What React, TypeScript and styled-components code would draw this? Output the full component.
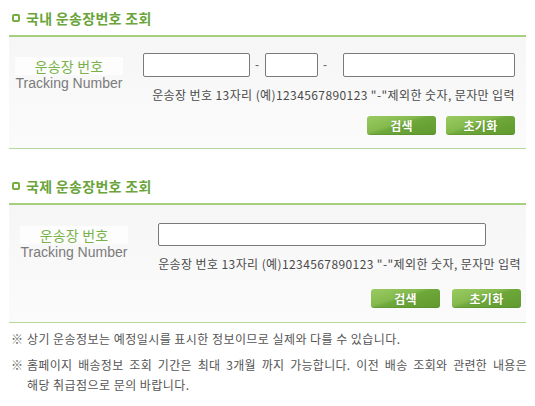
import React from 'react';
import styled, { createGlobalStyle } from 'styled-components';

const Global = createGlobalStyle`
  html, body { margin: 0; padding: 0; background: #fff; }
  body { font-family: "Noto Sans CJK KR", "Noto Sans", sans-serif; }
`;

const Page = styled.div`
  width: 517px;
  margin-left: 9px;
`;

const Section = styled.section<{ $top: number }>`
  margin-top: ${(p) => p.$top}px;
`;

const TitleBar = styled.h2`
  margin: 0;
  height: 35px;
  display: flex;
  align-items: center;
  gap: 6px;
  padding-left: 3px;
  font-size: 14px;
  font-weight: 700;
  color: #6aa43a;
  letter-spacing: 0.3px;
  border-bottom: 2px solid #a7cf80;
`;

const TitleIcon = styled.span`
  width: 8px;
  height: 8px;
  box-sizing: border-box;
  border: 2px solid #76ae43;
  border-radius: 2px;
  background: #fff;
  flex: none;
`;

const Panel = styled.div<{ $pad: string }>`
  padding: ${(p) => p.$pad};
  background: linear-gradient(to bottom, #f6f6f6, #fbfbfb);
  border-bottom: 1px solid #b7d89c;
  display: flex;
  flex-direction: column;
`;

const FormRow = styled.div<{ $gap: number }>`
  display: flex;
  align-items: flex-start;
  gap: ${(p) => p.$gap}px;
`;

const LabelCol = styled.div<{ $top: number; $left: number }>`
  width: 108px;
  margin-top: ${(p) => p.$top}px;
  margin-left: ${(p) => p.$left}px;
  display: flex;
  flex-direction: column;
  align-items: center;
  flex: none;
`;

const LabelKo = styled.div`
  width: 100%;
  height: 18px;
  line-height: 18px;
  text-align: center;
  background: #fdfdfd;
  color: #79b24a;
  font-size: 14px;
  letter-spacing: 0.2px;
`;

const LabelEn = styled.div`
  line-height: 16px;
  font-family: "Liberation Sans", Arial, sans-serif;
  font-size: 14px;
  color: #7b7b7b;
`;

const FieldArea = styled.div`
  flex: 1;
  display: flex;
  flex-direction: column;
`;

const InputRow = styled.div`
  display: flex;
  align-items: center;
`;

const TextInput = styled.input<{ $w: number; $h: number }>`
  width: ${(p) => p.$w}px;
  height: ${(p) => p.$h}px;
  box-sizing: border-box;
  border: 1px solid #7a7a7a;
  border-radius: 2px;
  background: #fff;
  padding: 0 4px;
  margin: 0;
  outline: none;
`;

const Dash = styled.span<{ $w: number; $pad: number }>`
  width: ${(p) => p.$w}px;
  box-sizing: border-box;
  padding-left: ${(p) => p.$pad}px;
  font-size: 12px;
  color: #666;
  font-family: "Liberation Sans", Arial, sans-serif;
`;

const Hint = styled.div`
  margin-top: 10px;
  line-height: 16px;
  font-size: 12px;
  color: #4a4a4a;
  text-align: right;
  white-space: nowrap;
  letter-spacing: 0.4px;
`;

const ButtonRow = styled.div<{ $top: number; $gap: number }>`
  margin-top: ${(p) => p.$top}px;
  display: flex;
  justify-content: flex-end;
  gap: ${(p) => p.$gap}px;
`;

const GreenButton = styled.button`
  width: 69px;
  height: 19px;
  margin: 0;
  padding: 0;
  border: none;
  border-radius: 3px;
  background: linear-gradient(162deg, #9acb63 0%, #85ba4d 40%, #6ea73a 50%, #5f9a2e 100%);
  box-shadow: inset 0 -1px 0 rgba(0, 0, 0, 0.08);
  color: #fff;
  font-family: "Noto Sans CJK KR", sans-serif;
  font-size: 12px;
  font-weight: 700;
  line-height: 19px;
  letter-spacing: 0.3px;
  text-shadow: 0 0 1px rgba(60, 100, 20, 0.5);
  cursor: pointer;
`;

const Notes = styled.ul`
  list-style: none;
  margin: 6px 0 0;
  padding: 0 0 0 2px;
  display: flex;
  flex-direction: column;
  gap: 6px;
`;

const Note = styled.li`
  display: flex;
  font-size: 12px;
  line-height: 20px;
  color: #555;
  white-space: nowrap;
  letter-spacing: 0.45px;
`;

const Mark = styled.span`
  width: 16px;
  flex: none;
  color: #666;
  letter-spacing: 0;
`;

const NoteText = styled.span`
  display: block;
`;

const JustifiedLine = styled.span`
  display: block;
  width: 500px;
  white-space: normal;
  text-align: justify;
  text-align-last: justify;
  letter-spacing: 0.3px;
`;

const hint = '운송장 번호 13자리 (예)1234567890123 "-"제외한 숫자, 문자만 입력';

export default function App() {
  return (
    <>
      <Global />
      <Page>
        <Section $top={0}>
          <TitleBar>
            <TitleIcon />
            국내 운송장번호 조회
          </TitleBar>
          <Panel $pad="16px 11px 13px 0">
            <FormRow $gap={20}>
              <LabelCol $top={4} $left={6}>
                <LabelKo>운송장 번호</LabelKo>
                <LabelEn>Tracking Number</LabelEn>
              </LabelCol>
              <FieldArea>
                <InputRow>
                  <TextInput $w={107} $h={24} />
                  <Dash $w={15} $pad={5}>-</Dash>
                  <TextInput $w={53} $h={24} />
                  <Dash $w={25} $pad={5}>-</Dash>
                  <TextInput $w={172} $h={24} />
                </InputRow>
                <Hint>{hint}</Hint>
              </FieldArea>
            </FormRow>
            <ButtonRow $top={13} $gap={10}>
              <GreenButton>검색</GreenButton>
              <GreenButton>초기화</GreenButton>
            </ButtonRow>
          </Panel>
        </Section>

        <Section $top={19}>
          <TitleBar>
            <TitleIcon />
            국제 운송장번호 조회
          </TitleBar>
          <Panel $pad="18px 5px 14px 0">
            <FormRow $gap={30}>
              <LabelCol $top={3} $left={11}>
                <LabelKo>운송장 번호</LabelKo>
                <LabelEn>Tracking Number</LabelEn>
              </LabelCol>
              <FieldArea>
                <InputRow>
                  <TextInput $w={328} $h={23} />
                </InputRow>
                <Hint>{hint}</Hint>
              </FieldArea>
            </FormRow>
            <ButtonRow $top={17} $gap={12}>
              <GreenButton>검색</GreenButton>
              <GreenButton>초기화</GreenButton>
            </ButtonRow>
          </Panel>
        </Section>

        <Notes>
          <Note>
            <Mark>※</Mark>
            <NoteText>상기 운송정보는 예정일시를 표시한 정보이므로 실제와 다를 수 있습니다.</NoteText>
          </Note>
          <Note>
            <Mark>※</Mark>
            <NoteText>
              <JustifiedLine>
                홈페이지 배송정보 조회 기간은 최대 3개월 까지 가능합니다. 이전 배송 조회와 관련한 내용은
              </JustifiedLine>
              해당 취급점으로 문의 바랍니다.
            </NoteText>
          </Note>
        </Notes>
      </Page>
    </>
  );
}
